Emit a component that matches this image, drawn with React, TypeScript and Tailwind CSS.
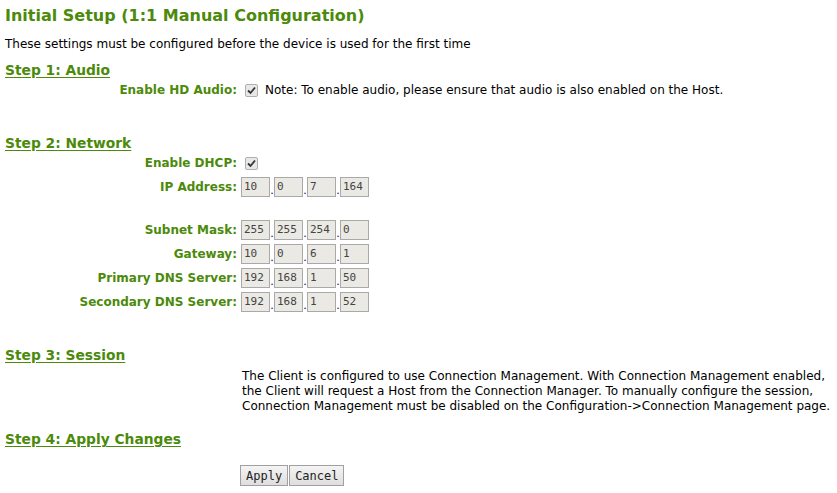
import React from "react";

const green = "text-[#4b8a0a]";

function Ip({ v }: { v: string[] }) {
  return (
    <div className="flex items-center">
      {v.map((x, i) => (
        <React.Fragment key={i}>
          {i > 0 && <span className="w-[4px] text-center text-[11px] leading-none text-[#000080] mt-[6px]">.</span>}
          <div className="w-[29px] h-[20px] border border-[#a9a9a9] bg-[#ebe9e3] text-[11px] leading-[18px] pl-[2px] text-[#444] font-['DejaVu_Sans_Mono',monospace]">
            {x}
          </div>
        </React.Fragment>
      ))}
    </div>
  );
}

function Check() {
  return (
    <div className="w-[13px] h-[13px] border border-[#b0b0b0] rounded-[2px] bg-[#e8e8e8] flex items-center justify-center">
      <svg width="9" height="9" viewBox="0 0 9 9">
        <path d="M1 4.5 L3.5 7 L8 1.5" stroke="#333" strokeWidth="1.8" fill="none" />
      </svg>
    </div>
  );
}

function Row({ label, children, h = "h-[24px]" }: { label: string; children: React.ReactNode; h?: string }) {
  return (
    <div className={`flex items-center ${h}`}>
      <div className={`w-[236px] pr-[4px] text-right font-bold ${green}`}>{label}</div>
      <div className="flex items-center">{children}</div>
    </div>
  );
}

function Step({ children }: { children: React.ReactNode }) {
  return <div className={`font-bold text-[13.8px] leading-[20px] underline underline-offset-[2px] ${green}`}>{children}</div>;
}

export default function App() {
  return (
    <div className="w-[837px] h-[493px] bg-white font-['DejaVu_Sans',sans-serif] text-[12px] text-black px-[5px] overflow-hidden">
      <div className={`pt-[5px] font-bold text-[16px] ${green} leading-[22px]`}>Initial Setup (1:1 Manual Configuration)</div>
      <div className="mt-[10px] leading-[14px]">These settings must be configured before the device is used for the first time</div>
      <div className="mt-[9px]">
        <Step>Step 1: Audio</Step>
      </div>
      <Row label="Enable HD Audio:" h="h-[20px]">
        <div className="ml-[4px]"><Check /></div>
        <span className="ml-[7px]">Note: To enable audio, please ensure that audio is also enabled on the Host.</span>
      </Row>
      <div className="mt-[33px]">
        <Step>Step 2: Network</Step>
      </div>
      <Row label="Enable DHCP:" h="h-[20px]">
        <div className="ml-[4px]"><Check /></div>
      </Row>
      <Row label="IP Address:" h="h-[28px]">
        <Ip v={["10", "0", "7", "164"]} />
      </Row>
      <div className="h-[17px]" />
      <Row label="Subnet Mask:"><Ip v={["255", "255", "254", "0"]} /></Row>
      <Row label="Gateway:"><Ip v={["10", "0", "6", "1"]} /></Row>
      <Row label="Primary DNS Server:"><Ip v={["192", "168", "1", "50"]} /></Row>
      <Row label="Secondary DNS Server:"><Ip v={["192", "168", "1", "52"]} /></Row>
      <div className="mt-[31px]">
        <Step>Step 3: Session</Step>
      </div>
      <div className="pl-[237px] mt-[4px] leading-[15px]">
        The Client is configured to use Connection Management. With Connection Management enabled,<br />
        the Client will request a Host from the Connection Manager. To manually configure the session,<br />
        Connection Management must be disabled on the Configuration-&gt;Connection Management page.
      </div>
      <div className="mt-[15px]">
        <Step>Step 4: Apply Changes</Step>
      </div>
      <div className="pl-[235px] mt-[16px] flex">
        <button className="h-[21px] px-[5px] border border-[#a0a0a0] bg-[linear-gradient(#f4f4f4,#dedede)] text-[12px] font-['DejaVu_Sans_Mono',monospace] text-[#222]">Apply</button>
        <button className="h-[21px] px-[5px] border border-[#a0a0a0] bg-[linear-gradient(#f4f4f4,#dedede)] text-[12px] font-['DejaVu_Sans_Mono',monospace] text-[#222] ml-[1px]">Cancel</button>
      </div>
    </div>
  );
}
